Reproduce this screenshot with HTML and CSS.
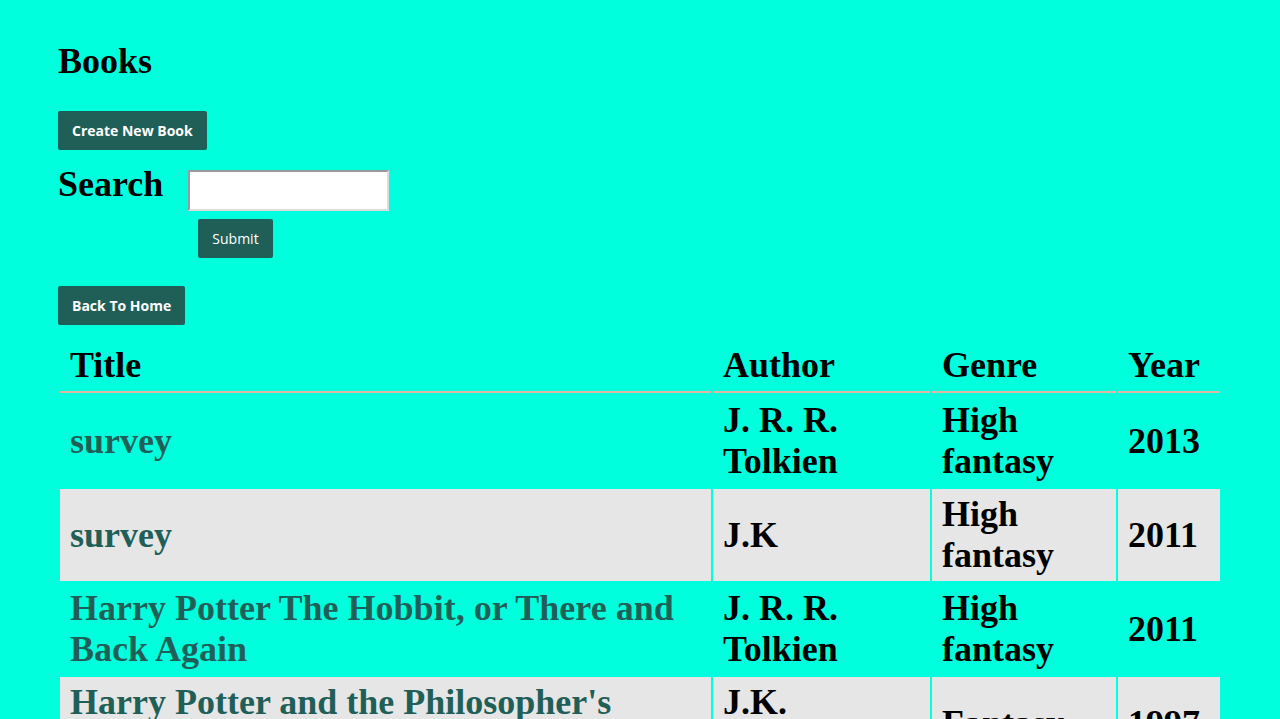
FILE: index.html
```html
<!DOCTYPE html>
<html lang="en">
<head>
<meta charset="utf-8">
<title>Books</title>
<link rel="stylesheet" href="styles.css">
</head>
<body>
<div class="page">
  <h1 class="page-title">Books</h1>
  <a class="btn btn-bold" href="#">Create New Book</a>
  <form class="search-row">
    <h1 class="search-label">Search</h1>
    <div class="search-controls">
      <input class="search-input" type="text">
      <button class="btn btn-submit" type="button">Submit</button>
    </div>
  </form>
  <a class="btn btn-bold btn-home" href="#">Back To Home</a>
  <table class="books">
    <thead>
      <tr>
        <th class="col-title">Title</th>
        <th class="col-author">Author</th>
        <th class="col-genre">Genre</th>
        <th class="col-year">Year</th>
      </tr>
    </thead>
    <tbody>
      <tr>
        <td><a href="#">survey</a></td>
        <td>J. R. R. Tolkien</td>
        <td>High fantasy</td>
        <td>2013</td>
      </tr>
      <tr class="alt">
        <td><a href="#">survey</a></td>
        <td>J.K</td>
        <td>High fantasy</td>
        <td>2011</td>
      </tr>
      <tr>
        <td><a href="#">Harry Potter The Hobbit, or There and Back Again</a></td>
        <td>J. R. R. Tolkien</td>
        <td>High fantasy</td>
        <td>2011</td>
      </tr>
      <tr class="alt">
        <td><a href="#">Harry Potter and the Philosopher's Stone</a></td>
        <td>J.K. Rowling</td>
        <td>Fantasy</td>
        <td>1997</td>
      </tr>
    </tbody>
  </table>
</div>
</body>
</html>
```

FILE: styles.css
```css
html, body {
  margin: 0;
  padding: 0;
  background: #00ffdd;
}

body {
  font-family: "Liberation Serif", "Times New Roman", serif;
  color: #000;
}

.page {
  padding: 41px 58px 40px 58px;
  width: 1164px;
}

.page-title {
  font-size: 36px;
  font-weight: bold;
  margin: 0 0 29px 0;
  line-height: 41px;
}

.btn {
  display: inline-block;
  box-sizing: border-box;
  height: 39px;
  padding: 0 14px;
  background: #1f5f58;
  color: #fff;
  font-family: "Open Sans", "DejaVu Sans", sans-serif;
  font-size: 14px;
  line-height: 39px;
  border: none;
  border-radius: 2px;
  text-decoration: none;
  cursor: pointer;
}

.btn-bold {
  font-weight: bold;
}

.search-row {
  display: flex;
  align-items: flex-start;
  margin: 14px 0 0 0;
}

.search-label {
  font-size: 36px;
  font-weight: bold;
  line-height: 41px;
  margin: 0;
}

.search-controls {
  display: flex;
  flex-direction: column;
  align-items: flex-start;
  margin-left: 25px;
  padding-top: 6px;
}

.search-input {
  box-sizing: border-box;
  width: 201px;
  height: 41px;
  margin: 0;
  background: #fff;
  border-style: solid;
  border-width: 2px;
  border-color: #9a9a9a #dcdcdc #dcdcdc #9a9a9a;
  padding: 2px 4px;
  font-size: 16px;
}

.btn-submit {
  margin: 8px 0 0 10px;
  font-weight: normal;
}

.btn-home {
  margin-top: 28px;
}

.books {
  margin-top: 13px;
  width: 1164px;
  table-layout: fixed;
  border-collapse: separate;
  border-spacing: 2px;
  font-size: 36px;
  font-weight: bold;
  line-height: 41px;
}

.books th,
.books td {
  box-sizing: border-box;
  padding: 5px 10px;
  text-align: left;
  vertical-align: middle;
}

.books th {
  border-bottom: 2px solid #e2b6a2;
}

.col-title { width: 651px; }
.col-author { width: 217px; }
.col-genre { width: 184px; }
.col-year { width: 102px; }

.books tr.alt td {
  background: #e6e6e6;
}

.books a {
  color: #1f5f58;
  text-decoration: none;
}
```
